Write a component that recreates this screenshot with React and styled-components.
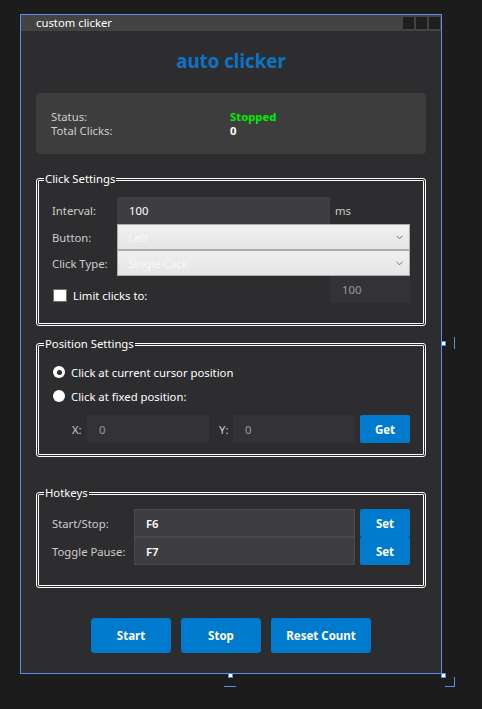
import React from "react";
import styled, { createGlobalStyle } from "styled-components";

const Global = createGlobalStyle`
  html, body { margin: 0; padding: 0; background: #1c1c1c; }
  body { font-family: "Noto Sans", "Open Sans", sans-serif; font-size: 11.3px; }
  * { box-sizing: border-box; }
`;

const Stage = styled.div`
  position: relative;
  width: 482px;
  height: 709px;
  padding: 14px 0 0 20px;
`;

const Window = styled.div`
  width: 422px;
  height: 660px;
  border: 1px solid #5b8de8;
  background: #2d2d30;
  display: flex;
  flex-direction: column;
`;

const TitleBar = styled.div`
  height: 16px;
  background: #434343;
  display: flex;
  align-items: center;
  padding: 0 1px 0 15px;
  color: #ffffff;
  font-size: 11.3px;
  line-height: 16px;
`;

const TitleText = styled.span`
  flex: 1;
`;

const WinButtons = styled.div`
  display: flex;
  gap: 2px;
`;

const WinButton = styled.span`
  width: 11px;
  height: 12px;
  background: #1f1f1f;
`;

const Content = styled.div`
  display: flex;
  flex-direction: column;
  padding: 0 15px;
`;

const Heading = styled.h1`
  margin: 18px 0 0;
  text-align: center;
  color: #0b74c8;
  font-size: 18.7px;
  line-height: 24px;
  font-weight: 700;
`;

const StatusPanel = styled.div`
  margin-top: 20px;
  background: #3d3d3d;
  border-radius: 4px;
  padding: 17px 15px 16px;
  display: grid;
  grid-template-columns: 179px 1fr;
  line-height: 14px;
`;

const StatusLabel = styled.span`
  color: #cccccc;
`;

const StatusValue = styled.span`
  color: ${(p) => p.$color || "#ffffff"};
  font-weight: 700;
`;

const Group = styled.fieldset`
  margin: ${(p) => p.$mt}px 0 0;
  border: 3px double #ffffff;
  border-radius: 3px;
  padding: ${(p) => p.$pt}px 0 ${(p) => p.$pb}px;
  min-width: 0;
`;

const Legend = styled.legend`
  margin-left: 5px;
  padding: 0 1px;
  color: #ffffff;
  font-size: 11.3px;
  line-height: 16px;
`;

const GroupBody = styled.div`
  display: flex;
  flex-direction: column;
  padding: 0 13px;
`;

const Row = styled.div`
  display: flex;
  align-items: ${(p) => p.$align || "center"};
  height: ${(p) => p.$h}px;
  padding-left: ${(p) => p.$indent || 0}px;
  margin-top: ${(p) => p.$mt || 0}px;
`;

const Label = styled.span`
  width: ${(p) => p.$w}px;
  flex: none;
  color: ${(p) => p.$color || "#cccccc"};
`;

const TextBox = styled.div`
  width: ${(p) => p.$w}px;
  height: 100%;
  flex: none;
  background: ${(p) => p.$bg || "#3e3e42"};
  border: 1px solid ${(p) => p.$border || "transparent"};
  color: ${(p) => (p.$muted ? "#9a9a9a" : "#ffffff")};
  font-weight: ${(p) => (p.$bold ? 600 : 400)};
  display: flex;
  align-items: center;
  padding-left: ${(p) => p.$pl || 11}px;
`;

const Unit = styled.span`
  margin-left: 5px;
  color: #cccccc;
`;

const Combo = styled.div`
  flex: 1;
  height: 100%;
  background: linear-gradient(#f0f0f0, #e5e5e5);
  border: 1px solid #acacac;
  display: flex;
  align-items: center;
  justify-content: space-between;
  padding: 0 6px 0 10px;
  color: #f8f8f8;
`;

const Chevron = styled.svg`
  width: 7px;
  height: 5px;
`;

const CheckBox = styled.span`
  width: 14px;
  height: 13px;
  background: #ffffff;
  border: 1px solid #707070;
  margin: 0 6px 1px 1px;
  flex: none;
`;

const Spacer = styled.span`
  flex: 1;
`;

const Radio = styled.span`
  width: 12px;
  height: 12px;
  border-radius: 50%;
  background: #ffffff;
  flex: none;
  margin: 0 6px 0 1px;
  display: flex;
  align-items: center;
  justify-content: center;
  &::after {
    content: "";
    width: ${(p) => (p.$checked ? 5 : 0)}px;
    height: ${(p) => (p.$checked ? 5 : 0)}px;
    border-radius: 50%;
    background: #2d2d30;
  }
`;

const RadioText = styled.span`
  color: #ffffff;
`;

const Gap = styled.span`
  width: ${(p) => p.$w}px;
  flex: none;
`;

const BlueButton = styled.button`
  width: ${(p) => p.$w}px;
  height: ${(p) => p.$h || 28}px;
  flex: none;
  border: none;
  border-radius: ${(p) => p.$r || 2}px;
  background: #007acc;
  color: #ffffff;
  font-family: inherit;
  font-size: 11.5px;
  font-weight: 700;
  padding: 0;
`;

const ButtonBar = styled.div`
  display: flex;
  justify-content: center;
  gap: 10px;
  margin-top: 30px;
`;

const Handle = styled.span`
  position: absolute;
  left: ${(p) => p.$x}px;
  top: ${(p) => p.$y}px;
  width: 5px;
  height: 5px;
  background: #ffffff;
  border: 1px solid #5b8de8;
`;

const Guide = styled.span`
  position: absolute;
  left: ${(p) => p.$x}px;
  top: ${(p) => p.$y}px;
  width: ${(p) => p.$w}px;
  height: ${(p) => p.$h}px;
  background: #5b8de8;
`;

const ChevronIcon = () => (
  <Chevron viewBox="0 0 7 5">
    <path d="M0.5 0.8 L3.5 3.8 L6.5 0.8" fill="none" stroke="#707070" strokeWidth="1" />
  </Chevron>
);

export default function App() {
  return (
    <>
      <Global />
      <Stage>
        <Window>
          <TitleBar>
            <TitleText>custom clicker</TitleText>
            <WinButtons>
              <WinButton />
              <WinButton />
              <WinButton />
            </WinButtons>
          </TitleBar>
          <Content>
            <Heading>auto clicker</Heading>
            <StatusPanel>
              <StatusLabel>Status:</StatusLabel>
              <StatusValue $color="#00ee00">Stopped</StatusValue>
              <StatusLabel>Total Clicks:</StatusLabel>
              <StatusValue>0</StatusValue>
            </StatusPanel>

            <Group $mt={17} $pt={10} $pb={20}>
              <Legend>Click Settings</Legend>
              <GroupBody>
                <Row $h={27}>
                  <Label $w={65}>Interval:</Label>
                  <TextBox $w={213}>100</TextBox>
                  <Unit>ms</Unit>
                </Row>
                <Row $h={26}>
                  <Label $w={65}>Button:</Label>
                  <Combo>
                    Left
                    <ChevronIcon />
                  </Combo>
                </Row>
                <Row $h={26}>
                  <Label $w={65}>Click Type:</Label>
                  <Combo>
                    Single Click
                    <ChevronIcon />
                  </Combo>
                </Row>
                <Row $h={27} $align="flex-end">
                  <CheckBox />
                  <RadioText>Limit clicks to:</RadioText>
                  <Spacer />
                  <TextBox $w={80} $bg="#333337" $muted>100</TextBox>
                </Row>
              </GroupBody>
            </Group>

            <Group $mt={10} $pt={8} $pb={11}>
              <Legend>Position Settings</Legend>
              <GroupBody>
                <Row $h={24}>
                  <Radio $checked />
                  <RadioText>Click at current cursor position</RadioText>
                </Row>
                <Row $h={24}>
                  <Radio />
                  <RadioText>Click at fixed position:</RadioText>
                </Row>
                <Row $h={28} $mt={7} $indent={20}>
                  <Label $w={15}>X:</Label>
                  <TextBox $w={122} $bg="#333337" $muted>0</TextBox>
                  <Gap $w={10} />
                  <Label $w={14}>Y:</Label>
                  <TextBox $w={122} $bg="#333337" $muted>0</TextBox>
                  <Gap $w={5} />
                  <BlueButton $w={50}>Get</BlueButton>
                </Row>
              </GroupBody>
            </Group>

            <Group $mt={28} $pt={8} $pb={20}>
              <Legend>Hotkeys</Legend>
              <GroupBody>
                <Row $h={28}>
                  <Label $w={82}>Start/Stop:</Label>
                  <TextBox $w={221} $border="#4a4a4e" $bold>F6</TextBox>
                  <Gap $w={5} />
                  <BlueButton $w={50}>Set</BlueButton>
                </Row>
                <Row $h={28}>
                  <Label $w={82}>Toggle Pause:</Label>
                  <TextBox $w={221} $border="#4a4a4e" $bold>F7</TextBox>
                  <Gap $w={5} />
                  <BlueButton $w={50}>Set</BlueButton>
                </Row>
              </GroupBody>
            </Group>

            <ButtonBar>
              <BlueButton $w={80} $h={35} $r={3}>Start</BlueButton>
              <BlueButton $w={80} $h={35} $r={3}>Stop</BlueButton>
              <BlueButton $w={100} $h={35} $r={3}>Reset Count</BlueButton>
            </ButtonBar>
          </Content>
        </Window>

        <Handle $x={441} $y={341} />
        <Handle $x={228} $y={673} />
        <Handle $x={441} $y={673} />
        <Guide $x={454} $y={337} $w={1} $h={12} />
        <Guide $x={224} $y={686} $w={12} $h={1} />
        <Guide $x={454} $y={677} $w={1} $h={10} />
        <Guide $x={445} $y={686} $w={10} $h={1} />
      </Stage>
    </>
  );
}
